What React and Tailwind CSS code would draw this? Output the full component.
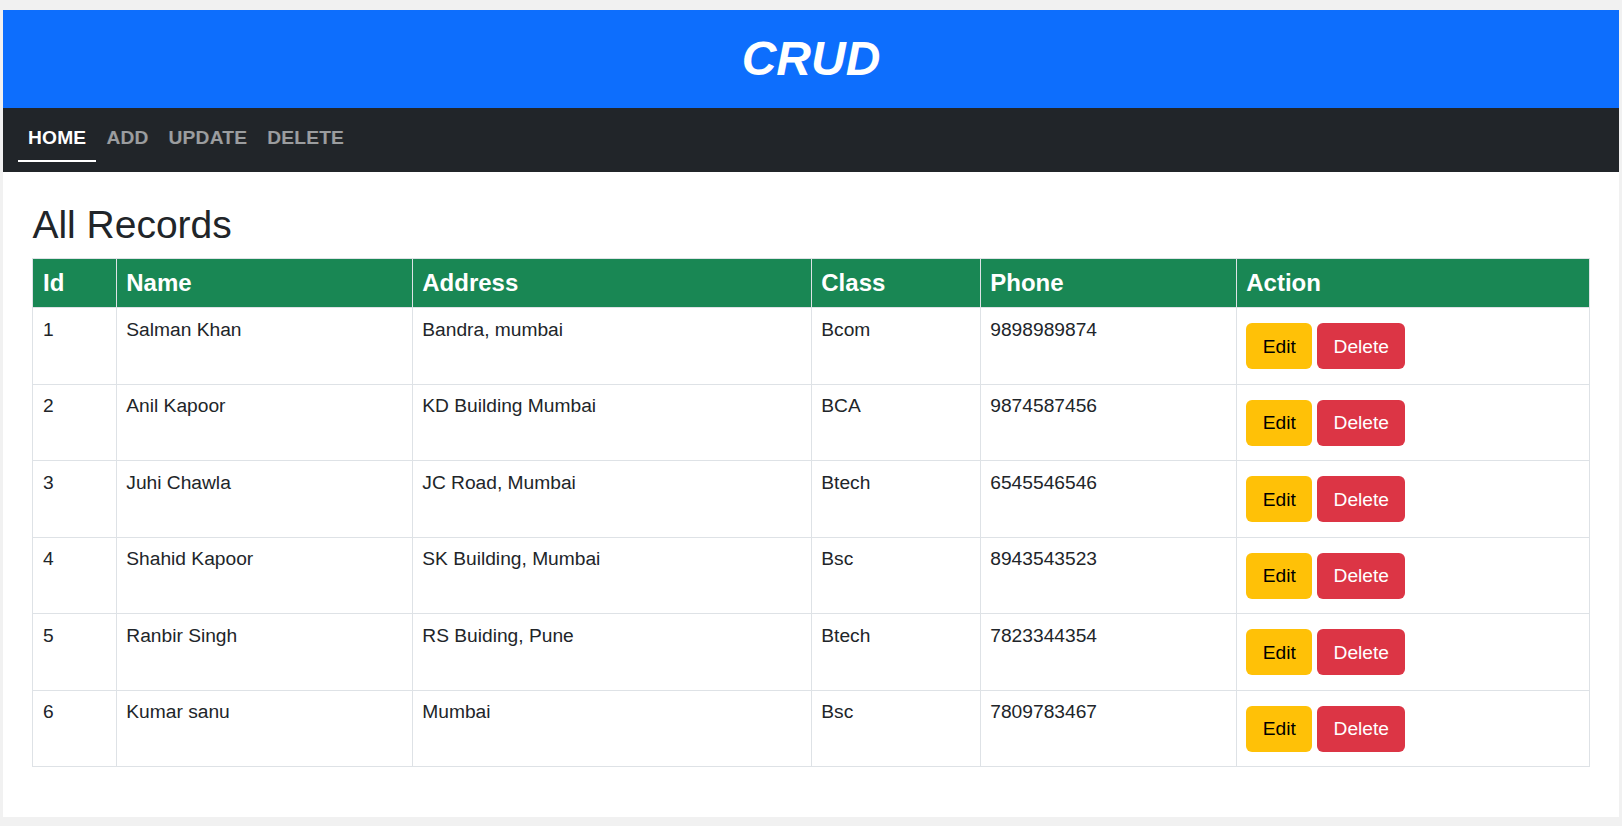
import { useState } from "react"

const records = [
  { id: 1, name: "Salman Khan", address: "Bandra, mumbai", cls: "Bcom", phone: "9898989874" },
  { id: 2, name: "Anil Kapoor", address: "KD Building Mumbai", cls: "BCA", phone: "9874587456" },
  { id: 3, name: "Juhi Chawla", address: "JC Road, Mumbai", cls: "Btech", phone: "6545546546" },
  { id: 4, name: "Shahid Kapoor", address: "SK Building, Mumbai", cls: "Bsc", phone: "8943543523" },
  { id: 5, name: "Ranbir Singh", address: "RS Buiding, Pune", cls: "Btech", phone: "7823344354" },
  { id: 6, name: "Kumar sanu", address: "Mumbai", cls: "Bsc", phone: "7809783467" },
]

const links = ["HOME", "ADD", "UPDATE", "DELETE"]

export default function App() {
  const [active, setActive] = useState("HOME")

  return (
    <div className="min-h-screen bg-[#f1f1f1] px-[3px] py-[10px] font-['Liberation_Sans',Arial,sans-serif] text-[#212529]">
      <div className="bg-white">
        {/* Title bar */}
        <header className="flex h-[98px] items-center justify-center bg-[#0d6efd]">
          <h1 className="text-[48px] font-bold italic leading-[57.6px] text-white">CRUD</h1>
        </header>

        {/* Nav */}
        <nav className="flex h-[64px] items-start bg-[#212529] px-[15px]">
          {links.map((link) => (
            <a
              key={link}
              href="#"
              onClick={(e) => {
                e.preventDefault()
                setActive(link)
              }}
              className={`mt-[16px] px-[10px] pb-[7.2px] text-[19.2px] font-bold leading-[28.8px] tracking-[0.2px] ${
                active === link ? "border-b-2 border-white text-white" : "border-b-2 border-transparent text-white/55"
              }`}
            >
              {link}
            </a>
          ))}
        </nav>

        {/* Records */}
        <section className="px-[29.4px] pb-[50px] pt-[29.8px]">
          <h2 className="mb-[10.4px] text-[39px] leading-[46px]">All Records</h2>
          <table className="w-full table-fixed border-collapse border border-[#dee2e6] text-[19.2px] leading-[23px]">
            <colgroup>
              <col className="w-[83.3px]" />
              <col className="w-[296px]" />
              <col className="w-[399px]" />
              <col className="w-[169px]" />
              <col className="w-[256px]" />
              <col />
            </colgroup>
            <thead>
              <tr className="bg-[#198754] text-left text-white">
                {["Id", "Name", "Address", "Class", "Phone", "Action"].map((h) => (
                  <th key={h} className="border border-[#dee2e6] p-[9.6px] text-[24px] font-bold leading-[28.8px]">
                    {h}
                  </th>
                ))}
              </tr>
            </thead>
            <tbody>
              {records.map((r) => (
                <tr key={r.id}>
                  <td className="border border-[#dee2e6] p-[9.6px] align-top">{r.id}</td>
                  <td className="border border-[#dee2e6] p-[9.6px] align-top">{r.name}</td>
                  <td className="border border-[#dee2e6] p-[9.6px] align-top">{r.address}</td>
                  <td className="border border-[#dee2e6] p-[9.6px] align-top">{r.cls}</td>
                  <td className="border border-[#dee2e6] p-[9.6px] align-top">{r.phone}</td>
                  <td className="border border-[#dee2e6] p-[9.6px] align-top">
                    <div className="mb-[4.9px] mt-[5.4px] flex gap-[5px]">
                      <button className="h-[46px] w-[66px] rounded-[6px] bg-[#ffc107] text-[19.2px] text-black">
                        Edit
                      </button>
                      <button className="h-[46px] w-[88px] rounded-[6px] bg-[#dc3545] text-[19.2px] text-white">
                        Delete
                      </button>
                    </div>
                  </td>
                </tr>
              ))}
            </tbody>
          </table>
        </section>
      </div>
    </div>
  )
}
